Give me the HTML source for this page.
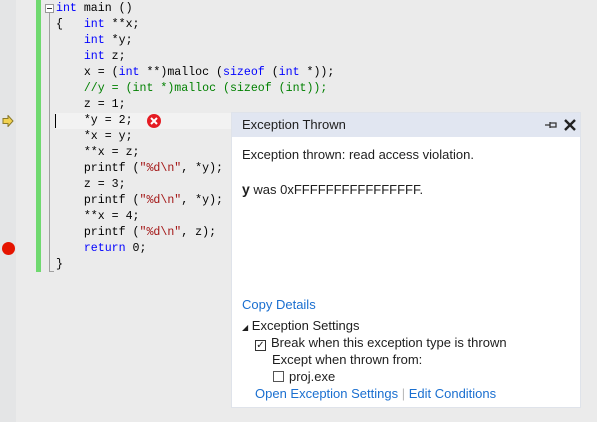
<!DOCTYPE html><html><head><style>
body{margin:0;width:597px;height:422px;background:#ebebeb;position:relative;overflow:hidden;font-family:"Liberation Sans",sans-serif}
.g{position:absolute;left:0;top:0;width:16px;height:422px;background:#e4e5e6}
.code{position:absolute;left:56px;top:1px;font-family:"Liberation Mono",monospace;font-size:11.6px;line-height:16px;white-space:pre;color:#000}
.k{color:#0000ff}.s{color:#a31515}.c{color:#008000}
.pop{position:absolute;left:231px;top:112px;width:350px;height:296px;background:#fff;border:1px solid #dfe3ea;box-sizing:border-box;font-size:13px;color:#1e1e1e}
.hd{height:24px;background:#e1e6f1;padding-left:10px;line-height:24px;font-size:13px}
.a{color:#1a6fd0}
.p{position:absolute;white-space:nowrap}
.cb{display:inline-block;width:11px;height:11px;border:1px solid #333;box-sizing:border-box;vertical-align:-1px;margin-right:5px;font-size:10px;line-height:9px;text-align:center}
</style></head><body>
<div class="g"></div>
<div style="position:absolute;left:36px;top:0;width:5px;height:272px;background:#6fd96f"></div>
<div style="position:absolute;left:49px;top:13px;width:1px;height:259px;background:#a0a0a0"></div>
<div style="position:absolute;left:49px;top:271px;width:5px;height:1px;background:#a0a0a0"></div>
<div style="position:absolute;left:45px;top:4px;width:9px;height:9px;border:1px solid #999;box-sizing:border-box;background:#fff"><div style="position:absolute;left:1px;top:3px;width:5px;height:1px;background:#333"></div></div>
<div style="position:absolute;left:55px;top:113px;width:176px;height:16px;background:#f2f2f2"></div>
<div style="position:absolute;left:55px;top:114px;width:1px;height:14px;background:#000"></div>
<svg style="position:absolute;left:2px;top:115px" width="12" height="12"><path d="M1 3.5h5v-3l5 5.5-5 5.5v-3H1z" fill="#f2d250" stroke="#8a7a2a" stroke-width="1"/></svg>
<div style="position:absolute;left:2px;top:242px;width:13px;height:13px;border-radius:50%;background:#e51400"></div>
<svg style="position:absolute;left:147px;top:114px" width="14" height="14"><circle cx="7" cy="7" r="7" fill="#e51c23"/><path d="M4 4l6 6M10 4l-6 6" stroke="#fff" stroke-width="2"/></svg>
<div class="code"><span class="k">int</span> main ()
{   <span class="k">int</span> **x;
    <span class="k">int</span> *y;
    <span class="k">int</span> z;
    x = (<span class="k">int</span> **)malloc (<span class="k">sizeof</span> (<span class="k">int</span> *));
    <span class="c">//y = (int *)malloc (sizeof (int));</span>
    z = 1;
    *y = 2;
    *x = y;
    **x = z;
    printf (<span class="s">"%d\n"</span>, *y);
    z = 3;
    printf (<span class="s">"%d\n"</span>, *y);
    **x = 4;
    printf (<span class="s">"%d\n"</span>, z);
    <span class="k">return</span> 0;
}</div>
<div class="pop">
<div class="hd">Exception Thrown</div>
<svg style="position:absolute;left:312px;top:7px" width="14" height="10"><path d="M1 5h5M6 2v6M6 3h6v4H6" stroke="#333" fill="none" stroke-width="1.3"/></svg>
<svg style="position:absolute;left:332px;top:6px" width="12" height="12"><path d="M1 1l10 10M11 1L1 11" stroke="#222" stroke-width="2.4"/></svg>
<div class="p" style="left:10px;top:34px">Exception thrown: read access violation.</div>
<div class="p" style="left:10px;top:68px"><b style="font-size:14px">y</b> was 0xFFFFFFFFFFFFFFFF.</div>
<div class="p a" style="left:10px;top:184px">Copy Details</div>
<div class="p" style="left:10px;top:205px"><span style="font-size:8px">◢</span> Exception Settings</div>
<div class="p" style="left:23px;top:222px"><span class="cb">✓</span>Break when this exception type is thrown</div>
<div class="p" style="left:40px;top:239px">Except when thrown from:</div>
<div class="p" style="left:41px;top:256px"><span class="cb" style="border-color:#555"></span>proj.exe</div>
<div class="p a" style="left:23px;top:273px">Open Exception Settings <span style="color:#bbb">|</span> Edit Conditions</div>
</div>
</body></html>
